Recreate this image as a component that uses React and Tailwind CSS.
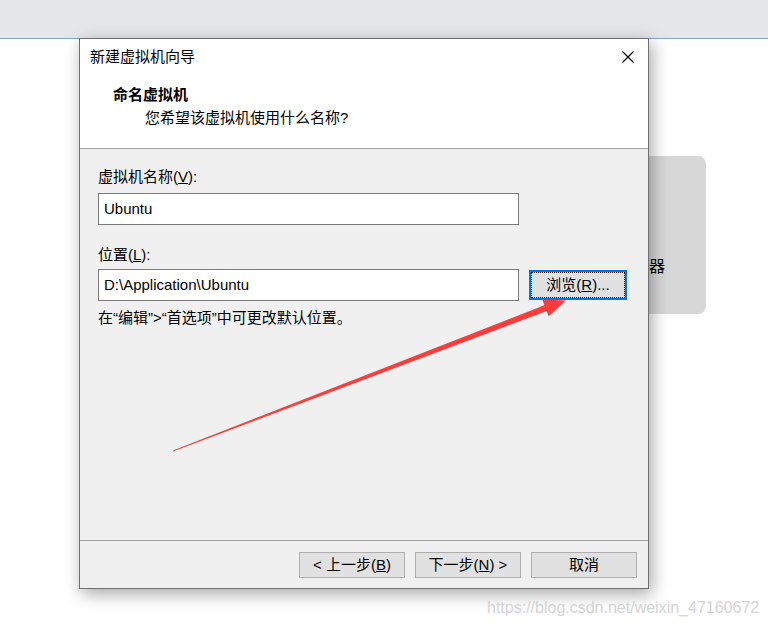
import React from "react";

const FONT = "font-['Liberation_Sans','Noto_Sans_CJK_SC',sans-serif]";

function Btn({ children }) {
  return (
    <div className="w-[106px] h-[26px] bg-[#e1e1e1] border border-[#adadad] flex items-center justify-center text-[15px] leading-[20px] text-black">
      {children}
    </div>
  );
}

export default function App() {
  return (
    <div className={`relative w-[768px] h-[627px] bg-white overflow-hidden ${FONT}`}>
      {/* top band */}
      <div className="h-[39px] bg-[#e5e6e8] border-b border-[#7fa8c9]" />

      {/* window behind */}
      <div className="absolute left-[590px] top-[156px] w-[116px] h-[158px] rounded-[8px] bg-[#d7d7d7]">
        <span className="absolute left-[59px] top-[101px] text-[16px] leading-[20px] text-black">器</span>
      </div>

      {/* dialog */}
      <div className="absolute left-[79px] top-[38px] w-[570px] h-[551px] border border-[#707070] bg-[#f0f0f0] flex flex-col shadow-[3px_5px_16px_rgba(0,0,0,0.35)]">
        {/* header */}
        <div className="h-[109px] bg-white flex flex-col">
          <div className="h-[36px] flex items-center justify-between pl-[10px] pr-[14px]">
            <span className="text-[15px] leading-[20px] text-black">新建虚拟机向导</span>
            <svg width="12" height="12" viewBox="0 0 12 12" className="block">
              <path d="M0.5 0.5 L11.5 11.5 M11.5 0.5 L0.5 11.5" stroke="#000" strokeWidth="1.1" fill="none" />
            </svg>
          </div>
          <div className="mt-[10px] pl-[33px] text-[15px] leading-[20px] font-bold text-black">命名虚拟机</div>
          <div className="mt-[3px] pl-[65px] text-[15px] leading-[20px] text-black">您希望该虚拟机使用什么名称?</div>
        </div>
        <div className="h-px bg-[#a0a0a0]" />

        {/* body */}
        <div className="flex-1 flex flex-col pl-[18px]">
          <div className="mt-[18px] text-[15px] leading-[20px] text-black">
            虚拟机名称(<u>V</u>):
          </div>
          <div className="mt-[6px] w-[421px] h-[32px] bg-white border border-[#7a7a7a] flex items-center pl-[5px] text-[15px] leading-[20px] text-black">
            Ubuntu
          </div>
          <div className="mt-[20px] text-[15px] leading-[20px] text-black">
            位置(<u>L</u>):
          </div>
          <div className="mt-[4px] flex items-center gap-[10px]">
            <div className="w-[421px] h-[32px] bg-white border border-[#7a7a7a] flex items-center pl-[5px] text-[15px] leading-[20px] text-black">
              D:\Application\Ubuntu
            </div>
            <div className="w-[98px] h-[30px] border-2 border-[#0078d7] bg-[#e1e1e1]">
              <div className="w-full h-full border border-dotted border-black flex items-center justify-center text-[15px] leading-[20px] text-black">
                浏览(<u>R</u>)...
              </div>
            </div>
          </div>
          <div className="mt-[7px] text-[15px] leading-[20px] text-black">
            在“编辑”&gt;“首选项”中可更改默认位置。
          </div>
        </div>

        {/* footer */}
        <div className="h-px bg-[#a0a0a0]" />
        <div className="h-[47px] flex justify-end items-start pt-[11px] pr-[11px] gap-[10px]">
          <Btn>&lt; 上一步(<u>B</u>)</Btn>
          <Btn>下一步(<u>N</u>) &gt;</Btn>
          <Btn>取消</Btn>
        </div>
      </div>

      {/* watermark */}
      <div className="absolute left-[487px] top-[598px] text-[16px] leading-[20px] text-[#d4d4d4] font-['Liberation_Sans',sans-serif]">
        https://blog.csdn.net/weixin_47160672
      </div>

      {/* red arrow */}
      <svg className="absolute left-0 top-0 pointer-events-none" width="768" height="627" viewBox="0 0 768 627">
        <polygon
          points="173,451.5 173.6,450.3 544.4,305.2 542.3,299.5 566,300.5 548.7,316.3 546.6,311"
          fill="#ff3b3b"
        />
      </svg>
    </div>
  );
}
